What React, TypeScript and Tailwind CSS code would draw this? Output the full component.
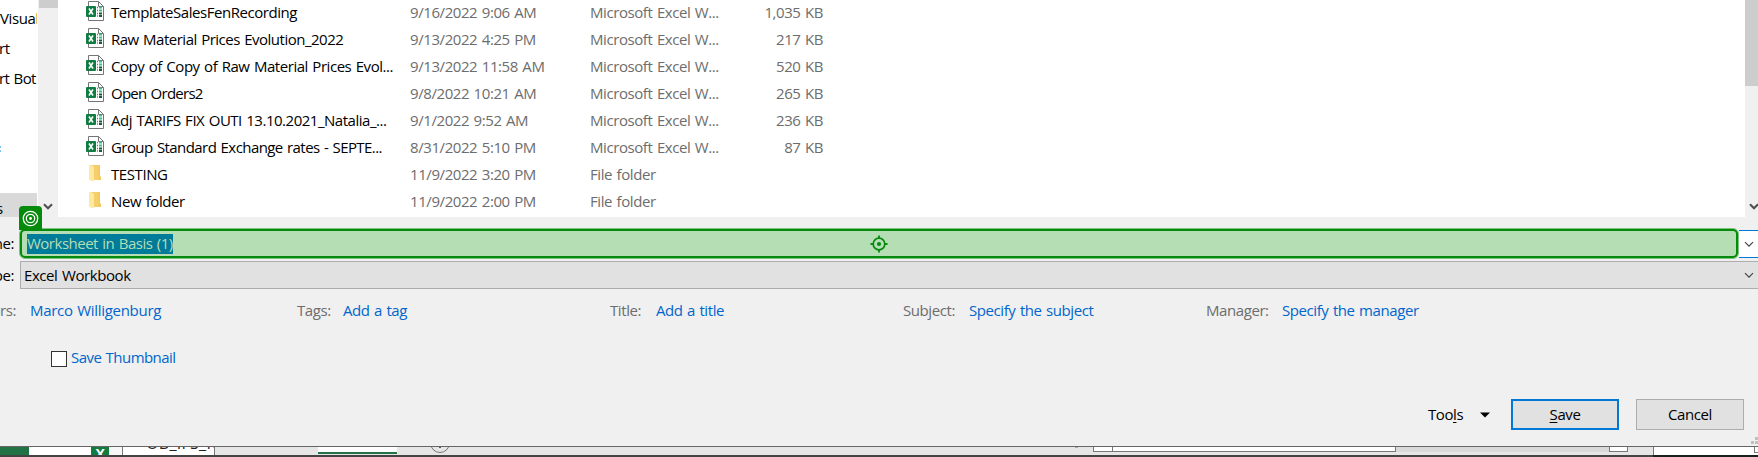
import React from "react";

type FileRow = { name: string; date: string; type: string; size: string; nameClass: string };

const EXCEL = "Microsoft Excel W...";

const files: FileRow[] = [
  { name: "TemplateSalesFenRecording", date: "9/16/2022 9:06 AM", type: EXCEL, size: "1,035 KB", nameClass: "tracking-[-0.45px]" },
  { name: "Raw Material Prices Evolution_2022", date: "9/13/2022 4:25 PM", type: EXCEL, size: "217 KB", nameClass: "tracking-[-0.5px]" },
  { name: "Copy of Copy of Raw Material Prices Evol...", date: "9/13/2022 11:58 AM", type: EXCEL, size: "520 KB", nameClass: "tracking-[-0.46px]" },
  { name: "Open Orders2", date: "9/8/2022 10:21 AM", type: EXCEL, size: "265 KB", nameClass: "tracking-[-0.75px]" },
  { name: "Adj TARIFS FIX OUTI 13.10.2021_Natalia_...", date: "9/1/2022 9:52 AM", type: EXCEL, size: "236 KB", nameClass: "tracking-[-0.48px]" },
  { name: "Group Standard Exchange rates - SEPTE...", date: "8/31/2022 5:10 PM", type: EXCEL, size: "87 KB", nameClass: "tracking-[-0.57px]" },
  { name: "TESTING", date: "11/9/2022 3:20 PM", type: "File folder", size: "", nameClass: "tracking-[-0.42px]" },
  { name: "New folder", date: "11/9/2022 2:00 PM", type: "File folder", size: "", nameClass: "tracking-[-0.4px]" },
];

function ExcelIcon() {
  return (
    <svg width="18" height="21" viewBox="0 0 18 21" className="block">
      <path d="M2.5 0.5H12.5L17.5 5.5V19.5H2.5Z" fill="#fff" stroke="#757575" />
      <path d="M12.5 0.5V5.5H17.5" fill="none" stroke="#757575" />
      <rect x="0" y="5" width="10" height="11" rx="1" fill="#107c41" />
      <path d="M3 7.5L7 13.5M7 7.5L3 13.5" stroke="#fff" strokeWidth="1.6" />
      <path d="M11 6.5H12M11 9.5H12M11 12.5H12M11 15H12" stroke="#21a366" strokeWidth="1.6" />
      <path d="M13 6.5H16M13 9.5H16" stroke="#33c481" strokeWidth="1.8" />
      <path d="M13 12.5H16M13 15H16" stroke="#185c37" strokeWidth="1.8" />
    </svg>
  );
}

function FolderIcon() {
  return (
    <svg width="18" height="21" viewBox="0 0 18 21" className="block">
      <path d="M5 2H13.5V14L15 14.5V17H5Z" fill="#f6cf6d" />
      <path d="M3 2H5L8 4V18.5L3 17Z" fill="#ffe8a0" />
      <path d="M12.5 2H14V13L15 14V17H12.5Z" fill="#f3c75d" />
    </svg>
  );
}

function Chevron({ className, bold }: { className?: string; bold?: boolean }) {
  return (
    <svg width="10" height="7" viewBox="0 0 10 7" className={className}>
      <path d="M1 1.2L5 5.2L9 1.2" fill="none" stroke={bold ? "#505050" : "#444"} strokeWidth={bold ? 2.1 : 1.2} />
    </svg>
  );
}

function Meta({ label, value, width, labelWidth }: { label: string; value: string; width: string; labelWidth: string }) {
  return (
    <div className={`flex shrink-0 ${width}`}>
      <span className={`shrink-0 text-[#6d6d6d] ${labelWidth}`}>{label}</span>
      <span className="text-[#0066cc]">{value}</span>
    </div>
  );
}

export default function App() {
  return (
    <div className="flex h-[457px] w-[1758px] flex-col overflow-hidden whitespace-nowrap bg-[#f0f0f0] font-['Open_Sans','Noto_Sans',sans-serif] text-[15px] leading-[18px] tracking-[-0.42px] text-black [word-spacing:1px]">
      <div className="flex h-[217px] shrink-0">
        <nav className="flex w-[37px] shrink-0 flex-col overflow-hidden bg-white">
          <span className="mt-[9px] h-[30px] -indent-[5px]">/Visual</span>
          <span className="h-[30px] -indent-px">rt</span>
          <span className="h-[30px] -indent-px tracking-[-0.6px]">rt Bot</span>
          <span className="mt-[47px] flex h-[6px] w-px flex-col justify-between"><i className="h-[2px] bg-[#7cc4f5]" /><i className="h-[2px] bg-[#7cc4f5]" /></span>
          <span className="mt-[41px] h-[24px] bg-[#d9d9d9] pt-[6px] -indent-[4px]">s</span>
        </nav>
        <div className="flex w-[21px] shrink-0 flex-col items-center justify-between border-l border-white bg-[#f0f0f0] pb-[7px]">
          <div className="h-[8px] w-[19px] bg-[#cdcdcd]" />
          <Chevron bold className="-ml-px" />
        </div>
        <div className="flex w-[1687px] shrink-0 flex-col bg-white">
          {files.map((f) => (
            <div key={f.name} className="flex h-[27px] shrink-0 pt-[3px] text-[#6d6d6d]">
              <div className="-mt-[2px] ml-[28px] w-[25px]">{f.size ? <ExcelIcon /> : <FolderIcon />}</div>
              <div className={`w-[299px] text-black ${f.nameClass}`}>{f.name}</div>
              <div className="w-[180px]">{f.date}</div>
              <div className="w-[133px]">{f.type}</div>
              <div className="w-[100px] text-right">{f.size}</div>
            </div>
          ))}
        </div>
        <div className="flex w-[13px] shrink-0 flex-col justify-between overflow-hidden bg-[#f0f0f0] pb-[7px]">
          <div className="h-[86px] bg-[#cdcdcd]" />
          <Chevron bold className="ml-[4px] shrink-0" />
        </div>
      </div>

      <div className="mt-[11px] flex h-[31px] shrink-0">
        <div className="flex w-[14px] shrink-0 justify-end pt-[6px]">ne:</div>
        <div className="relative ml-[5px] flex h-[31px] w-[1720px] shrink-0 items-center rounded-[6px] border border-[#7cc47f] bg-[#b5deb5]">
          <div className="flex h-[29px] w-full items-center rounded-[5px] border-2 border-[#058a0b] pl-[5px]">
            <span className="h-[20px] bg-[#007b99] tracking-[-0.5px] text-[#b5deb5]">Worksheet in Basis (1)</span>
          </div>
          <svg className="absolute left-[850px] top-[6px]" width="18" height="18" viewBox="0 0 18 18">
            <circle cx="9" cy="9" r="5.8" fill="none" stroke="#058a0b" strokeWidth="1.7" />
            <circle cx="9" cy="9" r="2.1" fill="#058a0b" />
            <path d="M9 0.5V3M9 15V17.5M0.5 9H3M15 9H17.5" stroke="#058a0b" strokeWidth="1.8" />
          </svg>
          <div className="absolute -left-px -top-[23px] flex h-[24px] w-[23px] items-center justify-center rounded-t-[4px] bg-[#058a0b]">
            <svg width="17" height="17" viewBox="0 0 17 17" fill="none" stroke="#fff">
              <circle cx="8.5" cy="8.5" r="7.2" strokeWidth="1.3" />
              <circle cx="8.5" cy="8.5" r="4.2" strokeWidth="1.3" />
              <circle cx="8.5" cy="8.5" r="1.4" fill="#fff" stroke="none" />
            </svg>
          </div>
        </div>
        <div className="mt-[2px] flex h-[28px] w-[19px] shrink-0 items-center border-y border-[#0078d7] bg-white pl-[5px]">
          <Chevron />
        </div>
      </div>

      <div className="mt-[2px] flex h-[28px] shrink-0">
        <div className="flex w-[14px] shrink-0 justify-end pt-[5px]">pe:</div>
        <div className="ml-[6px] flex w-[1738px] shrink-0 items-center justify-between border-y border-l border-[#adadad] bg-[#e1e1e1] pl-[3px] pr-[4px]">
          <span className="-mt-px">Excel Workbook</span>
          <Chevron />
        </div>
      </div>

      <div className="mt-[12px] flex h-[20px] shrink-0">
        <div className="flex w-[16px] shrink-0 justify-end text-[#6d6d6d]">ors:</div>
        <span className="ml-[14px] w-[267px] shrink-0 tracking-[-0.3px] text-[#0066cc]">Marco Willigenburg</span>
        <Meta label="Tags:" value="Add a tag" width="w-[313px]" labelWidth="w-[46px]" />
        <Meta label="Title:" value="Add a title" width="w-[293px]" labelWidth="w-[46px]" />
        <Meta label="Subject:" value="Specify the subject" width="w-[303px]" labelWidth="w-[66px]" />
        <Meta label="Manager:" value="Specify the manager" width="w-[303px]" labelWidth="w-[76px]" />
      </div>

      <div className="mt-[27px] flex h-[20px] shrink-0 pl-[51px]">
        <div className="mt-[3px] h-[16px] w-[16px] border border-[#333] bg-white" />
        <span className="ml-[4px] tracking-[-0.55px] text-[#0066cc]">Save Thumbnail</span>
      </div>

      <div className="mt-[31px] flex h-[31px] shrink-0 items-center pl-[1428px]">
        <span className="w-[53px] pb-[2px]">Too<u className="underline-offset-2">l</u>s</span>
        <svg width="10" height="6" viewBox="0 0 10 6" className="-ml-px shrink-0"><path d="M0 0.5H10L5 5.5Z" fill="#000" /></svg>
        <button className="ml-[21px] h-[31px] w-[108px] shrink-0 border-2 border-[#0078d7] bg-[#e1e1e1] pb-[2px]"><u className="underline-offset-2">S</u>ave</button>
        <button className="ml-[17px] h-[31px] w-[108px] shrink-0 border border-[#adadad] bg-[#e1e1e1] pb-[2px]">Cancel</button>
      </div>

      <div className="flex h-[16px] shrink-0 items-end justify-end">
        <svg width="7" height="7" viewBox="0 0 7 7" className="mb-[2px]" fill="#bfbfbf"><path d="M4 0H7V3H4ZM0 4H3V7H0ZM4 4H7V7H4Z" /></svg>
      </div>
      <div className="flex h-[9px] shrink-0 items-start overflow-hidden border-t border-[#666] bg-[#e6e6e6]">
        <div className="h-[8px] w-[29px] shrink-0 bg-[#217346]" />
        <div className="h-[8px] w-[62px] shrink-0 bg-white" />
        <div className="flex h-[8px] w-[18px] shrink-0 justify-center overflow-hidden bg-[#107c41] text-[14px] font-bold leading-[16px] text-white"><span className="-mt-px">X</span></div>
        <div className="h-[8px] w-[13px] shrink-0 bg-[#f7f7f7]" />
        <div className="flex h-[8px] w-[93px] shrink-0 overflow-hidden border-l border-r border-[#777] bg-white pl-[23px] text-[16px] leading-[20px] tracking-[0.3px] text-[#222]"><span className="-mt-[14px]">OB_IFS_R</span></div>
        <div className="ml-[103px] h-[7px] w-[79px] shrink-0 border-b-2 border-[#217346] bg-white" />
        <svg width="20" height="8" viewBox="0 0 20 8" className="ml-[33px] shrink-0"><circle cx="10" cy="-4" r="9.5" fill="none" stroke="#777" /><path d="M9 0H11V1H9Z" fill="#555" /></svg>
        <div className="ml-[625px] h-px w-[3px] shrink-0 bg-[#aaa]" />
        <div className="ml-[15px] flex h-[5px] w-[303px] shrink-0 border-x border-b border-[#777] bg-white"><div className="w-[19px] border-r border-[#777]" /></div>
        <div className="h-[5px] w-[213px] shrink-0 bg-[#d9d9d9]" />
        <div className="h-[5px] w-[19px] shrink-0 border-x border-b border-[#777] bg-white" />
        <div className="ml-[25px] flex h-[8px] w-[105px] shrink-0 justify-end border-l border-[#777] bg-white"><div className="h-[6px] w-[4px] border-b border-l border-[#777]" /></div>
      </div>
      <div className="flex h-[2px] shrink-0"><div className="w-[1653px] bg-[#444]" /><div className="w-[105px] bg-[#17201f]" /></div>
    </div>
  );
}
